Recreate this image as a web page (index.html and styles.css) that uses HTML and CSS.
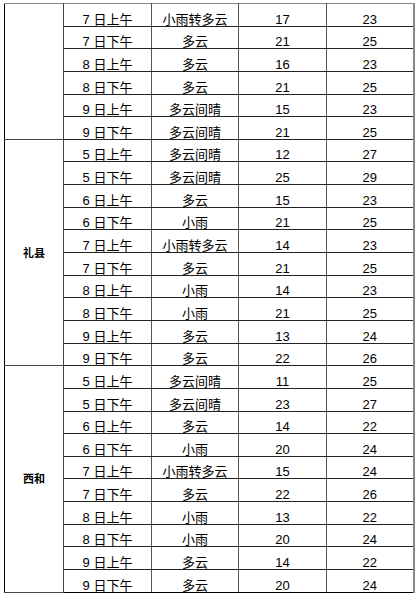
FILE: index.html
```html
<!DOCTYPE html>
<html lang="zh">
<head>
<meta charset="utf-8">
<link rel="stylesheet" href="styles.css">
</head>
<body>
<table class="wx">
<colgroup><col class="c1"><col class="c2"><col class="c3"><col class="c4"><col class="c5"></colgroup>
<tbody>
<tr><td class="region" rowspan="6"></td><td>7 日上午</td><td>小雨转多云</td><td>17</td><td>23</td></tr>
<tr><td>7 日下午</td><td>多云</td><td>21</td><td>25</td></tr>
<tr><td>8 日上午</td><td>多云</td><td>16</td><td>23</td></tr>
<tr><td>8 日下午</td><td>多云</td><td>21</td><td>25</td></tr>
<tr><td>9 日上午</td><td>多云间晴</td><td>15</td><td>23</td></tr>
<tr><td>9 日下午</td><td>多云间晴</td><td>21</td><td>25</td></tr>

<tr><td class="region" rowspan="10">礼县</td><td>5 日上午</td><td>多云间晴</td><td>12</td><td>27</td></tr>
<tr><td>5 日下午</td><td>多云间晴</td><td>25</td><td>29</td></tr>
<tr><td>6 日上午</td><td>多云</td><td>15</td><td>23</td></tr>
<tr><td>6 日下午</td><td>小雨</td><td>21</td><td>25</td></tr>
<tr><td>7 日上午</td><td>小雨转多云</td><td>14</td><td>23</td></tr>
<tr><td>7 日下午</td><td>多云</td><td>21</td><td>25</td></tr>
<tr><td>8 日上午</td><td>小雨</td><td>14</td><td>23</td></tr>
<tr><td>8 日下午</td><td>小雨</td><td>21</td><td>25</td></tr>
<tr><td>9 日上午</td><td>多云</td><td>13</td><td>24</td></tr>
<tr><td>9 日下午</td><td>多云</td><td>22</td><td>26</td></tr>

<tr><td class="region" rowspan="10">西和</td><td>5 日上午</td><td>多云间晴</td><td>11</td><td>25</td></tr>
<tr><td>5 日下午</td><td>多云间晴</td><td>23</td><td>27</td></tr>
<tr><td>6 日上午</td><td>多云</td><td>14</td><td>22</td></tr>
<tr><td>6 日下午</td><td>小雨</td><td>20</td><td>24</td></tr>
<tr><td>7 日上午</td><td>小雨转多云</td><td>15</td><td>24</td></tr>
<tr><td>7 日下午</td><td>多云</td><td>22</td><td>26</td></tr>
<tr><td>8 日上午</td><td>小雨</td><td>13</td><td>22</td></tr>
<tr><td>8 日下午</td><td>小雨</td><td>20</td><td>24</td></tr>
<tr><td>9 日上午</td><td>多云</td><td>14</td><td>22</td></tr>
<tr><td>9 日下午</td><td>多云</td><td>20</td><td>24</td></tr>
</tbody>
</table>
</body>
</html>
```

FILE: styles.css
```css
html, body {
  margin: 0;
  padding: 0;
  background: #ffffff;
}
body {
  padding: 3px 0 0 4px;
  font-family: "Liberation Sans", "Noto Sans CJK SC", sans-serif;
  color: #000;
}
.wx {
  border-collapse: collapse;
  table-layout: fixed;
  width: 410px;
  font-size: 13px;
}
.c1 { width: 59px; }
.c2 { width: 88px; }
.c3 { width: 87px; }
.c4 { width: 88px; }
.c5 { width: 87px; }
.wx tr {
  height: 22.65px;
}
.wx td {
  border: 1px solid #222;
  border-left-color: #555;
  border-right-color: #555;
  padding: 0;
  text-align: center;
  vertical-align: bottom;
  line-height: 12px;
  white-space: nowrap;
}
.wx tr:first-child td {
  border-top: 1px solid #888;
}
.wx td:last-child {
  border-right: 2px solid #888;
}
.wx td.region {
  vertical-align: middle;
  font-weight: bold;
  font-size: 11px;
  line-height: 14px;
  border-left: 1px solid #000;
  border-right-color: #444;
  border-top-color: #444;
  border-bottom-color: #444;
}
.wx tr:last-child td {
  border-bottom-color: #000;
}
```
